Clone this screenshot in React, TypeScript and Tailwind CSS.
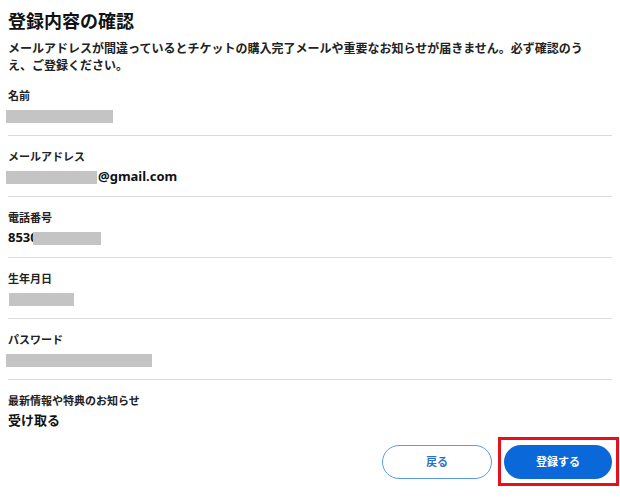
import React from 'react';

const FONT = { fontFamily: '"Noto Sans", "Noto Sans CJK JP", sans-serif' };

const Redacted = ({ w, className = '' }: { w: string; className?: string }) => (
  <span className={`inline-block h-[13px] bg-[#c4c4c4] ${w} ${className}`} />
);

function Row({ label, children, last = false }: { label: string; children: React.ReactNode; last?: boolean }) {
  return (
    <div className={`pt-[13px] pb-[9px] ${last ? '' : 'border-b border-[#dadada]'}`}>
      <div className="text-[11px] leading-[16px] font-bold text-[#222]">{label}</div>
      <div className="mt-[2px] flex h-[20px] items-center text-[13px] font-bold text-[#111]">{children}</div>
    </div>
  );
}

export default function App() {
  return (
    <div className="min-h-[501px] bg-white px-2 pt-[8px]" style={FONT}>
      <h1 className="text-[18px] leading-[26px] font-bold text-[#111]">登録内容の確認</h1>
      <p className="mt-[6px] pr-[14px] text-[12px] leading-[17px] font-bold text-[#222]">
        メールアドレスが間違っているとチケットの購入完了メールや重要なお知らせが届きません。必ず確認のうえ、ご登録ください。
      </p>

      <div className="mt-[1px]">
        <Row label="名前">
          <Redacted w="w-[107px]" className="-ml-[2px]" />
        </Row>
        <Row label="メールアドレス">
          <Redacted w="w-[91px]" className="-ml-[2px]" />
          <span className="ml-px">@gmail.com</span>
        </Row>
        <Row label="電話番号">
          <span>853</span>
          <span className="inline-block w-[3px] overflow-hidden">0</span>
          <Redacted w="w-[68px]" />
        </Row>
        <Row label="生年月日">
          <Redacted w="w-[65px]" className="ml-px" />
        </Row>
        <Row label="パスワード">
          <Redacted w="w-[146px]" className="-ml-[2px]" />
        </Row>
        <Row label="最新情報や特典のお知らせ" last>
          <span>受け取る</span>
        </Row>
      </div>

      <div className="mt-[5px] flex justify-end gap-3">
        <button className="h-[34px] w-[110px] rounded-full border border-[#5b9be4] bg-white text-[11px] font-bold text-[#2a6fcf]">
          戻る
        </button>
        <div className="relative">
          <button className="h-[34px] w-[108px] rounded-full bg-[#0b68d9] text-[11px] font-bold text-white">
            登録する
          </button>
          <span className="pointer-events-none absolute -top-[8px] -bottom-[7px] -left-[6px] -right-[7px] border-[3px] border-[#e8101a]" />
        </div>
      </div>
    </div>
  );
}
